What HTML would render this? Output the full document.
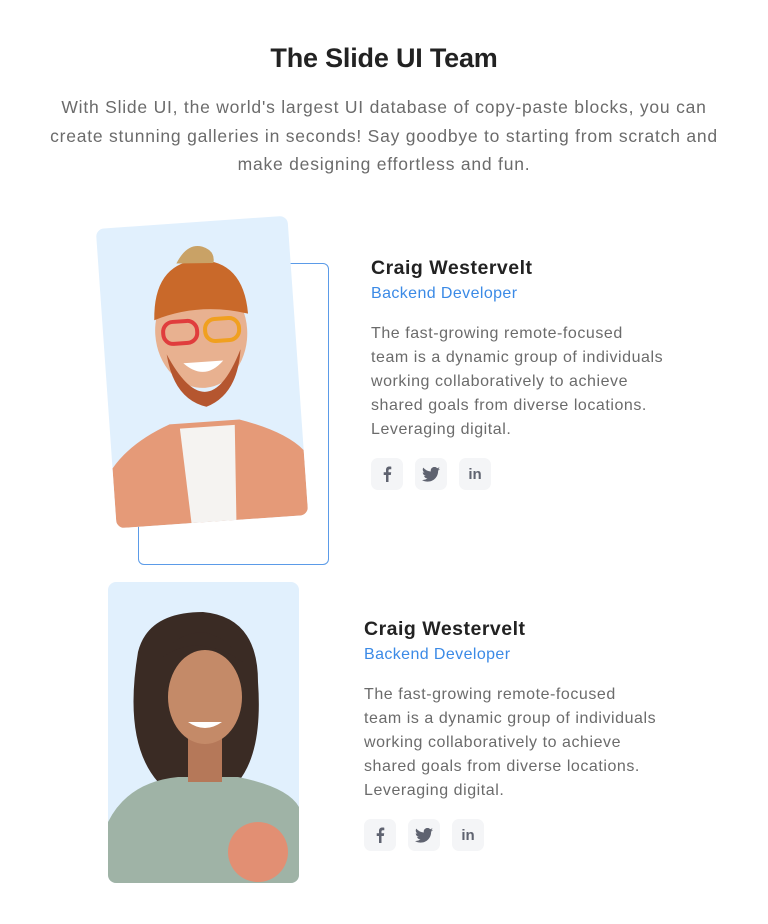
<!DOCTYPE html>
<html><head><style>
body{margin:0;width:768px;height:924px;background:#fff;font-family:"Liberation Sans",sans-serif;position:relative;overflow:hidden}
h1{position:absolute;top:43px;left:0;width:768px;text-align:center;margin:0;font-size:27px;font-weight:700;color:#222;letter-spacing:-0.2px}
.lead{position:absolute;top:93px;left:0;width:768px;text-align:center;font-size:17.5px;line-height:28.5px;color:#6b6b6b;letter-spacing:0.78px;white-space:nowrap}
.name{position:absolute;font-size:19.5px;font-weight:700;color:#222;letter-spacing:0.5px}
.role{position:absolute;font-size:16px;color:#3b8ae6;letter-spacing:0.4px}
.desc{position:absolute;font-size:16px;line-height:24px;color:#6b6b6b;white-space:nowrap;letter-spacing:0.55px}
.icons{position:absolute;display:flex;gap:12px}
.ic{width:32px;height:32px;border-radius:7px;background:#f4f5f7;display:flex;align-items:center;justify-content:center}
.photo{position:absolute;background:#e1f0fd;border-radius:8px;overflow:hidden}
</style></head><body>
<h1>The Slide UI Team</h1>
<div class="lead">With Slide UI, the world's largest UI database of copy-paste blocks, you can<br>create stunning galleries in seconds! Say goodbye to starting from scratch and<br>make designing effortless and fun.</div>

<div style="position:absolute;left:138px;top:263px;width:189px;height:300px;border:1.3px solid #5b9be8;border-radius:6px"></div>
<div class="photo" style="left:106px;top:222px;width:192px;height:300px;transform:rotate(-4deg)">
<svg width="192" height="300" viewBox="0 0 192 300">
<path d="M0 240 Q20 215 60 200 L130 200 Q175 215 192 235 L192 300 L0 300Z" fill="#e59a78"/>
<path d="M70 205 L125 205 L120 300 L75 300Z" fill="#f5f3f1"/>
<ellipse cx="98" cy="110" rx="46" ry="56" fill="#e8b190"/>
<path d="M62 130 Q98 210 136 130 Q130 175 98 185 Q66 175 62 130Z" fill="#b5562f"/>
<path d="M52 95 Q55 40 98 38 Q145 40 146 95 Q98 80 52 95Z" fill="#c9692a"/>
<path d="M78 40 Q90 20 105 25 Q118 30 115 42Z" fill="#c9a266"/>
<rect x="60" y="98" width="34" height="22" rx="10" fill="none" stroke="#e03d3d" stroke-width="4"/>
<rect x="102" y="98" width="34" height="22" rx="10" fill="none" stroke="#f0a020" stroke-width="4"/>
<path d="M78 140 Q98 160 118 140Z" fill="#fff"/>
</svg></div>
<div class="name" style="left:371px;top:257px">Craig Westervelt</div>
<div class="role" style="left:371px;top:285px">Backend Developer</div>
<div class="desc" style="left:371px;top:322px">The fast-growing remote-focused<br>team is a dynamic group of individuals<br>working collaboratively to achieve<br>shared goals from diverse locations.<br>Leveraging digital.</div>
<div class="icons" style="left:371px;top:458px">
<div class="ic"><svg width="14" height="16" viewBox="0 0 10 16"><path d="M6.5 16V9h2.3l.4-2.8H6.5V4.5c0-.8.3-1.3 1.4-1.3H9.3V.7C9 .6 8.2.5 7.3.5 5.3.5 4 1.7 4 3.9v2.3H1.7V9H4v7z" fill="#5f6370"/></svg></div>
<div class="ic"><svg width="18" height="15" viewBox="0 0 24 20"><path d="M24 2.4a10 10 0 0 1-2.8.8A5 5 0 0 0 23.3.4a10 10 0 0 1-3.1 1.2A4.9 4.9 0 0 0 11.8 6 14 14 0 0 1 1.7.9a4.9 4.9 0 0 0 1.5 6.6A4.9 4.9 0 0 1 1 6.9a4.9 4.9 0 0 0 3.9 4.8 5 5 0 0 1-2.2.1 4.9 4.9 0 0 0 4.6 3.4A9.9 9.9 0 0 1 0 17.3 14 14 0 0 0 7.5 19.5c9.1 0 14-7.5 14-14v-.6A10 10 0 0 0 24 2.4z" fill="#5f6370"/></svg></div>
<div class="ic"><span style="font-weight:700;color:#5f6370;font-size:15px">in</span></div>
</div>

<div class="photo" style="left:108px;top:582px;width:191px;height:301px">
<svg width="191" height="301" viewBox="0 0 191 301">
<path d="M30 70 Q40 30 95 30 Q150 35 150 100 Q155 170 130 200 L50 200 Q15 160 30 70Z" fill="#3a2b24"/>
<path d="M0 240 Q20 200 70 195 L130 195 Q180 205 191 225 L191 301 L0 301Z" fill="#9fb3a6"/>
<circle cx="150" cy="270" r="30" fill="#e28f73"/>
<rect x="80" y="150" width="34" height="50" fill="#b57859"/>
<ellipse cx="97" cy="115" rx="37" ry="47" fill="#c48a68"/>
<path d="M80 140 Q97 152 114 140Z" fill="#fff"/>
<path d="M55 75 Q90 50 135 80 Q120 55 95 50 Q65 52 55 75Z" fill="#3a2b24"/>
</svg></div>
<div class="name" style="left:364px;top:618px">Craig Westervelt</div>
<div class="role" style="left:364px;top:646px">Backend Developer</div>
<div class="desc" style="left:364px;top:683px">The fast-growing remote-focused<br>team is a dynamic group of individuals<br>working collaboratively to achieve<br>shared goals from diverse locations.<br>Leveraging digital.</div>
<div class="icons" style="left:364px;top:819px">
<div class="ic"><svg width="14" height="16" viewBox="0 0 10 16"><path d="M6.5 16V9h2.3l.4-2.8H6.5V4.5c0-.8.3-1.3 1.4-1.3H9.3V.7C9 .6 8.2.5 7.3.5 5.3.5 4 1.7 4 3.9v2.3H1.7V9H4v7z" fill="#5f6370"/></svg></div>
<div class="ic"><svg width="18" height="15" viewBox="0 0 24 20"><path d="M24 2.4a10 10 0 0 1-2.8.8A5 5 0 0 0 23.3.4a10 10 0 0 1-3.1 1.2A4.9 4.9 0 0 0 11.8 6 14 14 0 0 1 1.7.9a4.9 4.9 0 0 0 1.5 6.6A4.9 4.9 0 0 1 1 6.9a4.9 4.9 0 0 0 3.9 4.8 5 5 0 0 1-2.2.1 4.9 4.9 0 0 0 4.6 3.4A9.9 9.9 0 0 1 0 17.3 14 14 0 0 0 7.5 19.5c9.1 0 14-7.5 14-14v-.6A10 10 0 0 0 24 2.4z" fill="#5f6370"/></svg></div>
<div class="ic"><span style="font-weight:700;color:#5f6370;font-size:15px">in</span></div>
</div>
</body></html>
